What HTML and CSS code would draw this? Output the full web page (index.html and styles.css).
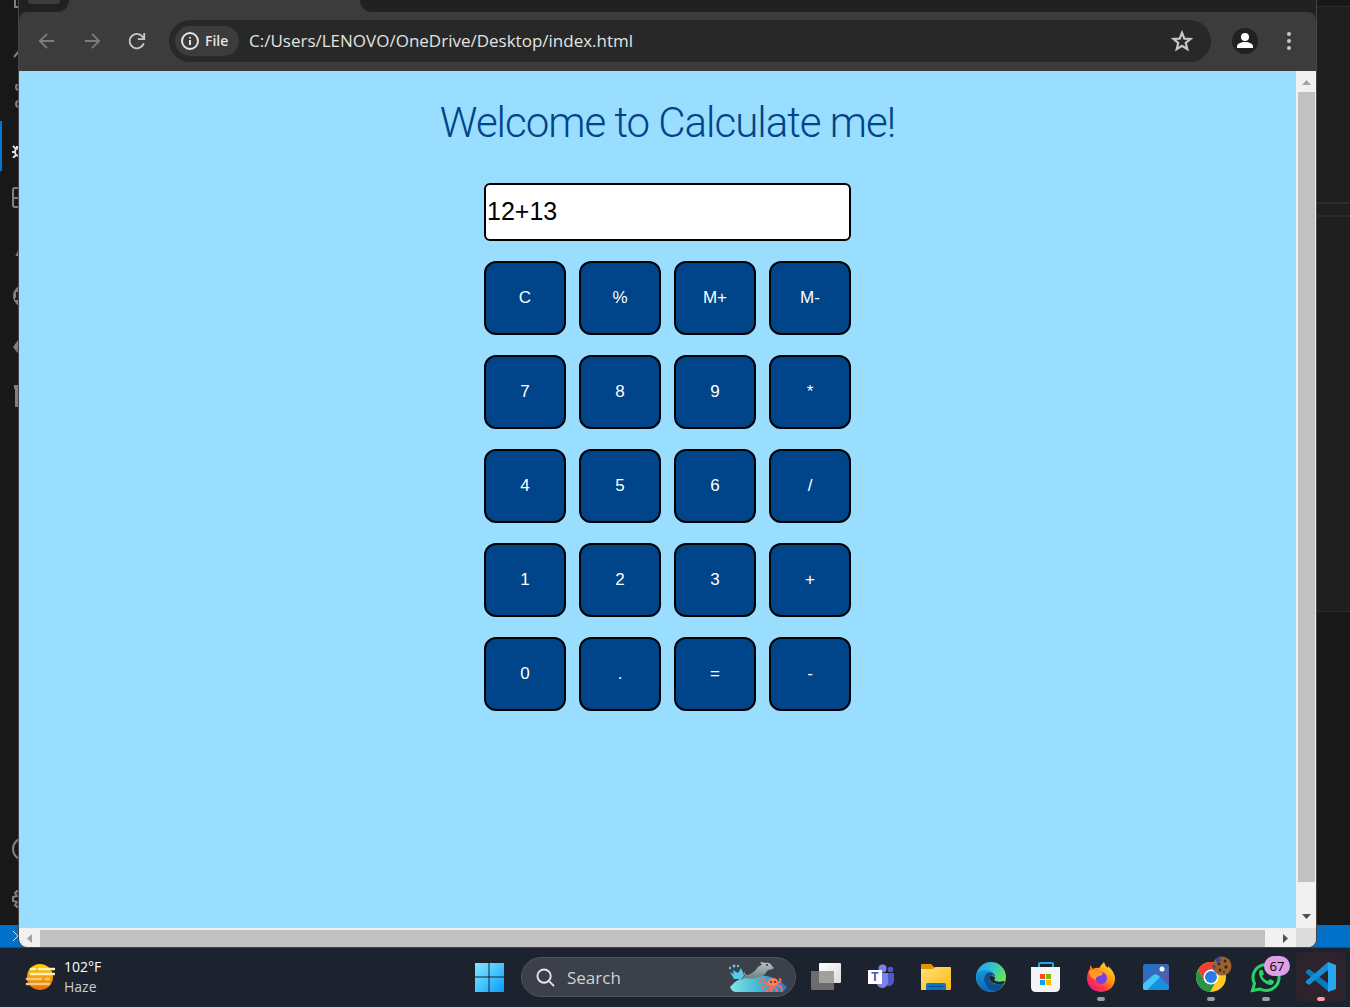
FILE: index.html
```html
<!DOCTYPE html>
<html lang="en">
<head>
<meta charset="utf-8">
<meta name="viewport" content="width=device-width, initial-scale=1">
<title>Calculate me</title>
<link rel="stylesheet" href="styles.css">
</head>
<body>
<div class="desktop">
  <div class="editor">
    <div class="editor-main">
      <nav class="activity" aria-label="Activity bar">
        <div class="act first"><svg viewBox="0 0 24 24"><path d="M3 2v20h14"/></svg></div>
        <div class="act"><svg viewBox="0 0 24 24"><path d="M2 23l6-7"/><circle cx="14" cy="10" r="7"/></svg></div>
        <div class="act"><svg viewBox="0 0 24 24"><circle cx="7" cy="3" r="3"/><circle cx="7" cy="20" r="3"/></svg></div>
        <div class="act active"><svg viewBox="0 0 24 24"><circle cx="7" cy="18" r="4"/><path d="M1 12l3 3M0 18h3M1 24l3-3M5 12v3"/></svg></div>
        <div class="act"><svg viewBox="0 0 24 24"><path d="M10 4H3q-2 0-2 2v15q0 2 2 2h17V14H1M10 4v19"/></svg></div>
        <div class="act"><svg viewBox="0 0 24 24"><path d="M11 8L5 21h6"/></svg></div>
        <div class="act"><svg viewBox="0 0 24 24"><circle class="solid" cx="12" cy="12" r="11"/><path class="dark" d="M5 8v7H3"/></svg></div>
        <div class="act"><svg viewBox="0 0 24 24"><path class="solid" d="M1 13l5-7 4 3-6 8zM4 17l3-3 3 3-4 2z"/></svg></div>
        <div class="act"><svg viewBox="0 0 24 24"><path class="solid" d="M2 1h6v4H2zM3 8h10v15H3zM3 5h5v4H3z"/></svg></div>
        <div class="act bottom"><svg viewBox="0 0 24 24"><circle cx="12" cy="11" r="11"/></svg></div>
        <div class="act"><svg viewBox="0 0 24 24"><path d="M9 1l-1 4-3-2-2 2 2 3-4 1v4l4 1-2 3 2 2 3-2 1 4h4"/></svg></div>
      </nav>
      <div class="editor-side"><div class="side-tabs"></div><div class="side-crumb"></div><div class="side-code"></div></div>
    </div>
    <footer class="status"><svg viewBox="0 0 16 16"><path d="M1 3l5 5-5 5M13 3L8 8l5 5"/></svg></footer>
  </div>

  <main class="browser">
    <div class="tabstrip"><div class="strip-left"><span></span></div><div class="strip-tab"></div><div class="strip-right"></div></div>
    <header class="toolbar">
      <button class="tool dim" aria-label="Back"><svg viewBox="0 0 20 20"><path d="M18 10H3M10 2l-8 8 8 8"/></svg></button>
      <button class="tool dim" aria-label="Forward"><svg viewBox="0 0 20 20"><path d="M2 10h15M10 2l8 8-8 8"/></svg></button>
      <button class="tool" aria-label="Reload"><svg viewBox="0 0 20 20"><path d="M17 6.500A8 8 0 1 0 17.500 12.500M18 1v7h-7"/></svg></button>
      <div class="address">
        <button class="chip"><svg viewBox="0 0 18 18"><circle cx="9" cy="9" r="8"/><path d="M9 8v5M9 5v1.500"/></svg>File</button>
        <input class="url" aria-label="Address" value="C:/Users/LENOVO/OneDrive/Desktop/index.html">
        <button class="star" aria-label="Bookmark"><svg viewBox="0 0 20 20"><path d="M10 2.500l2.100 5.300 5.600.4-4.300 3.600 1.400 5.600L10 14.300l-4.800 3.100 1.400-5.600-4.300-3.600 5.600-.4z"/></svg></button>
      </div>
      <button class="profile" aria-label="Profile"><svg viewBox="0 0 26 26"><circle cx="13" cy="9" r="4"/><path d="M5 20v-1.500C5 15.500 9 14 13 14s8 1.500 8 4.500V20z"/></svg></button>
      <button class="more" aria-label="Menu"><svg viewBox="0 0 6 20"><circle cx="3" cy="3" r="2"/><circle cx="3" cy="10" r="2"/><circle cx="3" cy="17" r="2"/></svg></button>
    </header>
    <div class="viewport">
      <section class="page">
        <div class="content">
          <h1>Welcome to Calculate me!</h1>
          <form class="calc">
            <input class="display" aria-label="Expression" value="12+13">
            <button type="button">C</button><button type="button">%</button><button type="button">M+</button><button type="button">M-</button>
            <button type="button">7</button><button type="button">8</button><button type="button">9</button><button type="button">*</button>
            <button type="button">4</button><button type="button">5</button><button type="button">6</button><button type="button">/</button>
            <button type="button">1</button><button type="button">2</button><button type="button">3</button><button type="button">+</button>
            <button type="button">0</button><button type="button">.</button><button type="button">=</button><button type="button">-</button>
          </form>
        </div>
      </section>
      <div class="vscroll"><svg class="faint" viewBox="0 0 20 21"><path d="M6 14h9l-4.500-5z"/></svg><div class="vthumb"></div><svg viewBox="0 0 20 21"><path d="M6 7h9l-4.500 5z"/></svg></div>
      <div class="hscroll"><svg class="faint" viewBox="0 0 21 19"><path d="M13 6v9l-5-4.500z"/></svg><div class="hthumb"></div><svg viewBox="0 0 21 19"><path d="M8 6v9l5-4.500z"/></svg></div>
      <div class="corner"></div>
    </div>
  </main>
</div>

<footer class="taskbar">
  <div class="weather">
    <svg viewBox="0 0 30 30"><defs><linearGradient id="sun" x2="0" y2="1"><stop stop-color="#ffd000"/><stop offset="1" stop-color="#f26b05"/></linearGradient></defs><circle cx="15" cy="15" r="13" fill="url(#sun)"/><g stroke="#fff0bd" stroke-width="2.600" stroke-linecap="round"><path d="M6 7h4M14 7h15M6 12h23"/><path stroke="#eacb8c" d="M2 17h14M21 17h3M2 22h22"/></g></svg>
    <div class="weather-text"><span>102°F</span><span class="haze">Haze</span></div>
  </div>
  <button class="task start" aria-label="Start"><svg viewBox="0 0 30 30"><defs><linearGradient id="win" x2="1" y2="1"><stop stop-color="#8be2ff"/><stop offset=".5" stop-color="#46c6ff"/><stop offset="1" stop-color="#0798fa"/></linearGradient></defs><path fill="url(#win)" d="M1 1h13.500v13.500H1zM15.500 1H30v13.500H15.500zM1 15.500h13.500V30H1zM15.500 15.500H30V30H15.500z"/></svg></button>
  <button class="search">
    <svg class="lens" viewBox="0 0 20 20"><circle cx="8.500" cy="8.500" r="7"/><path d="M14 14l5 5"/></svg>
    <span>Search</span>
    <svg class="art" viewBox="0 0 60 32"><defs><linearGradient id="sea" x2="1"><stop stop-color="#83e6e5"/><stop offset=".5" stop-color="#43b7d3"/><stop offset="1" stop-color="#137ee4"/></linearGradient><linearGradient id="dol" x2="0" y2="1"><stop stop-color="#b9c4c6"/><stop offset="1" stop-color="#66797d"/></linearGradient></defs>
      <path fill="url(#sea)" d="M2 26Q12 14 29 14Q47 14 59 26Q56 31 53 31H8Q4 31 2 26z"/>
      <path fill="#5bc8e8" d="M14 18H6L2 11l4 2-1-4 5 3 3-5 3 7z"/><g fill="#5bc8e8"><circle cx="2" cy="7" r="1.200"/><circle cx="6" cy="5" r="1.500"/><circle cx="10" cy="5" r="1.200"/></g>
      <path fill="url(#dol)" d="M16 10Q17 14 20 14Q26 12 30 6Q32 4 34 4L32 1L38 2Q42 1 44 5L46 7Q44 9 40 9Q36 16 28 17Q22 18 18 17L13 19Q13 16 17 15Q15 12 16 10z"/>
      <circle cx="39" cy="4" r="1" fill="#263b44"/>
      <g fill="none" stroke="#f46e50" stroke-width="2" stroke-linecap="round"><path d="M42 23q-6 0-6-4t-5 2M42 24q-7 0-8 4M43 26l-4 4M45 26l-2 4M47 26l2 4M49 24q5 1 5 6M49 22q5 0 3-4"/></g><ellipse cx="45" cy="21" rx="5" ry="4" fill="#ff8058"/><circle cx="43" cy="21" r="1" fill="#442a40"/><circle cx="47" cy="21" r="1" fill="#442a40"/>
    </svg>
  </button>
  <nav class="tasks" aria-label="Pinned apps">
    <button class="task" aria-label="Task view"><svg viewBox="0 0 32 32"><defs><linearGradient id="tv" x2="1" y2="1"><stop stop-color="#fff"/><stop offset="1" stop-color="#dadada"/></linearGradient></defs><rect x="9" y="2" width="22" height="20" rx="1" fill="url(#tv)"/><path fill="#6c6c6c" d="M1 10h8v12h15v7H2l-1-1z"/><path fill="#a0a0a0" d="M9 10h15v12H9z"/></svg></button>
    <button class="task" aria-label="Teams"><svg viewBox="0 0 32 32"><circle cx="17.500" cy="7.500" r="4" fill="#7b83eb"/><circle cx="25.500" cy="8.500" r="2.800" fill="#5059c9"/><path fill="#5059c9" d="M21 12h8v8q-1 6-7 5z"/><path fill="#7b83eb" d="M10 12h13v9q-1 6-6 6-5-1-6-6z"/><rect x="3" y="9" width="14" height="14" fill="#fff"/><text x="10" y="20" text-anchor="middle" class="teams-t">T</text></svg></button>
    <button class="task" aria-label="File Explorer"><svg viewBox="0 0 32 32"><defs><linearGradient id="fold" x2="1" y2="1"><stop stop-color="#ffe07b"/><stop offset="1" stop-color="#fdb813"/></linearGradient></defs><path fill="#df9600" d="M1 4q0-1 1-1h9l3 3v6H1z"/><path fill="url(#fold)" d="M1 8h12l2-2h15q1 0 1 1v21q0 1-1 1H1z"/><path fill="#0875c4" d="M6 29v-5q0-2 2-2h16q2 0 2 2v5z"/><path stroke="#064a8a" d="M9 25.500h14"/></svg></button>
    <button class="task" aria-label="Edge"><svg viewBox="0 0 32 32"><defs><linearGradient id="eg" x2="1" y2=".5"><stop stop-color="#209fe7"/><stop offset=".5" stop-color="#30c2d2"/><stop offset="1" stop-color="#6cea48"/></linearGradient><linearGradient id="eb" x2="0" y2="1"><stop stop-color="#1598dc"/><stop offset="1" stop-color="#0a63b5"/></linearGradient></defs><circle cx="16" cy="16" r="15" fill="url(#eg)"/><path fill="url(#eb)" d="M1 14q2-5 9-5 8 0 10 6-5-2-6 2 0 5 6 6 5 1 9-2-4 10-13 10Q2 30 1 14z"/><path fill="#124e8d" d="M12 12q-5 5-1 12 4 6 10 6 6-2 8-8-4 3-9 1-6-2-6-6 1-4 6-2-2-5-8-3z"/><path fill="#1b2430" d="M19 15q2 2 0 4 3 3 10 1l1 1q-2 3-8 2-7-1-8-6 1-4 5-1z"/></svg></button>
    <button class="task" aria-label="Store"><svg viewBox="0 0 32 32"><path d="M9 8V3q0-1 1-1h12q1 0 1 1v5" fill="none" stroke="#22a5ef" stroke-width="2"/><path fill="#f4f4f4" d="M1 6h29v20q0 5-5 5H6q-5 0-5-5z"/><path fill="#f25022" d="M10 13h5v5h-5z"/><path fill="#7fba00" d="M16 13h5v5h-5z"/><path fill="#00a4ef" d="M10 19h5v5h-5z"/><path fill="#ffb900" d="M16 19h5v5h-5z"/></svg></button>
    <button class="task running" aria-label="Firefox"><svg viewBox="0 0 32 32"><defs><linearGradient id="ff" x1="1" x2=".2" y2="1"><stop stop-color="#fff44f"/><stop offset=".45" stop-color="#ff980e"/><stop offset=".75" stop-color="#ff3647"/><stop offset="1" stop-color="#e31587"/></linearGradient></defs><path fill="url(#ff)" d="M5 4l3 4q3-2 6-1 3-4 5-6 1 4 4 6V5q7 6 7 13-1 12-14 13Q3 30 2 18 2 11 5 8z"/><circle cx="16" cy="17" r="6" fill="#7542e5"/><path fill="#ff9b20" d="M4 10q4-2 7 0l4 1 3 1q-1 3-4 3-4 1-3 4-6-1-7-9z"/><path fill="#b833bd" d="M11 19q3 4 8 3l-3 1q-4 0-5-4z"/></svg></button>
    <button class="task" aria-label="Photos"><svg viewBox="0 0 32 32"><defs><linearGradient id="ph" x2="1" y2="1"><stop stop-color="#1976cf"/><stop offset="1" stop-color="#64559d"/></linearGradient></defs><rect x="3" y="3" width="26" height="26" rx="2" fill="url(#ph)"/><path fill="#1690e1" d="M12 16q4-5 8 0l9 9v2q0 2-2 2H7z"/><path fill="#43c8f8" d="M3 23l9-8q4-4 8 1L7 29H5q-2 0-2-2z"/><circle cx="22" cy="8" r="2.500" fill="#fff"/></svg></button>
    <button class="task running" aria-label="Chrome"><svg viewBox="0 0 32 32"><circle cx="16" cy="16" r="15" fill="#ffcb24"/><path fill="#ea4335" d="M3 8.500A15 15 0 0 1 29 8.500H16L9.500 20z"/><path fill="#289447" d="M3 8.500l6.500 11.500q2 3 6.500 3h3.500L15 31A15 15 0 0 1 3 8.500z"/><circle cx="16" cy="16" r="7.500" fill="#fff"/><circle cx="16" cy="16" r="6" fill="#287de9"/></svg><svg class="cookie" viewBox="0 0 20 20"><circle cx="10" cy="10" r="9.500" fill="#9a622e"/><path fill="#354c93" d="M3 3l5-3 1 5-4 2zM0 9l4 1-2 4z"/><g fill="#412616"><circle cx="7" cy="8" r="1.500"/><circle cx="13" cy="5" r="1.500"/><circle cx="14" cy="11" r="1.700"/><circle cx="8" cy="14" r="1.500"/><circle cx="12" cy="16" r="1"/></g></svg></button>
    <button class="task running" aria-label="WhatsApp"><svg viewBox="0 0 32 32"><path fill="none" stroke="#25d366" stroke-width="3" d="M2.500 29.500l2-7A13 13 0 1 1 10 28z"/><path fill="#25d366" d="M10 9q2-1 3 1l1 3-2 2q2 4 6 5l2-2 4 2q0 4-4 4Q11 22 9 13q0-3 1-4z"/></svg><span class="badge">67</span></button>
    <button class="task running current" aria-label="Visual Studio Code"><svg viewBox="0 0 32 32"><path fill="#0879bd" d="M1 10l3-2 20 15v8L1 12z"/><path fill="#168fd2" d="M1 20L23 1v8L4 24l-3-2z"/><path fill="#29a8f2" d="M23 1l8 3v24l-8 3z"/></svg></button>
  </nav>
</footer>
</body>
</html>
```
FILE: styles.css
```css
* { box-sizing: border-box; }
body { margin: 0; min-height: 100vh; display: flex; flex-direction: column; background: #181818; font-family: "Open Sans", "Noto Sans", sans-serif; }
button, input { font: inherit; color: inherit; margin: 0; padding: 0; border: 0; background: none; }
svg { display: block; flex: none; }
h1 { margin: 0; }

.desktop { flex: 1; display: grid; overflow: hidden; }
.desktop > * { grid-area: 1 / 1; min-width: 0; }

/* Code editor behind the browser */
.editor { display: flex; flex-direction: column; background: #181818; }
.editor-main { flex: 1; display: flex; justify-content: space-between; }
.activity { width: 48px; display: flex; flex-direction: column; }
.act { height: 50px; display: flex; align-items: center; justify-content: center; }
.act.first { height: 21px; align-items: flex-end; padding-bottom: 12px; }
.act.active { border-left: 2px solid #0078d4; padding-right: 2px; }
.act.bottom { margin-top: auto; }
.act svg { width: 24px; height: 24px; fill: none; stroke: #808080; stroke-width: 2; }
.act.active svg { stroke: #e0e0e0; }
.act .solid { fill: #808080; stroke: none; }
.act .dark { stroke: #202020; }
.editor-side { width: 34px; padding-top: 6px; display: flex; flex-direction: column; }
.side-tabs { height: 198px; border-top: 1px solid #2b2b2b; border-bottom: 2px solid #2b2b2b; background: #1f1f1f; }
.side-crumb { height: 13px; border-bottom: 2px solid #2b2b2b; background: #1f1f1f; }
.side-code { height: 395px; border-bottom: 1px solid #2b2b2b; background: #1f1f1f; }
.status { height: 22px; background: #0070c8; padding: 3px 12px; }
.status svg { width: 16px; height: 16px; fill: none; stroke: #d8e8f4; stroke-width: 1; }

/* Browser window */
.browser { margin: 0 34px 0 19px; display: flex; flex-direction: column; border-radius: 0 0 8px 8px; overflow: hidden; background: #1f2221; box-shadow: 0 0 0 1px #454545; }
.tabstrip { height: 12px; background: #3c3c3c; display: flex; }
.strip-left { width: 50px; background: #1f2221; border-radius: 0 0 12px 0; display: flex; justify-content: center; }
.strip-left span { width: 32px; height: 4px; background: #3c3c3c; border-radius: 0 0 12px 12px; }
.strip-tab { width: 291px; }
.strip-right { flex: 1; background: #1f2221; border-radius: 0 0 0 12px; }
.toolbar { height: 59px; display: flex; align-items: center; padding: 0 20px 2px 5px; border-radius: 8px 8px 0 0; background: #3c3c3c; }
.tool { width: 45px; display: flex; justify-content: center; }
.tool svg { width: 18px; height: 18px; }
.tool svg, .star svg { fill: none; stroke: #c7c7c7; stroke-width: 2; }
.tool.dim svg { stroke: #7c7c7c; }
.address { flex: 1; min-width: 0; height: 42px; margin-left: 10px; padding: 6px; display: flex; align-items: center; border-radius: 21px; background: #282828; }
.chip { height: 30px; width: 64px; padding-left: 6px; display: flex; align-items: center; gap: 6px; border-radius: 15px; background: #3c3c3c; color: #e3e3e3; font-size: 14px; font-weight: 600; }
.chip svg { width: 18px; height: 18px; fill: none; stroke: #e3e3e3; stroke-width: 2; }
.url { flex: 1; min-width: 0; margin-left: 10px; height: 30px; color: #e3e3e3; font-size: 17px; }
.star { margin-right: 12px; }
.star svg { width: 22px; height: 22px; }
.profile { margin-left: 21px; width: 26px; height: 26px; border-radius: 50%; background: #1f2221; }
.profile svg { width: 26px; height: 26px; fill: #fff; }
.more { margin-left: 24px; width: 14px; display: flex; justify-content: center; }
.more svg { width: 6px; height: 20px; fill: #c7c7c7; }

.viewport { flex: 1; display: grid; grid-template-columns: minmax(0, 1fr) 20px; grid-template-rows: 1fr 19px; background: #f1f1f1; }
.page { background: #99ddff; overflow: hidden; }
.content { width: calc(100% + 20px); display: flex; flex-direction: column; align-items: center; padding: 27px 0; }
h1 { color: #004489; font-family: Roboto, sans-serif; font-size: 42px; line-height: 50px; font-weight: 300; letter-spacing: -1px; }
.calc { margin-top: 35px; display: grid; grid-template-columns: repeat(4, 82px); gap: 20px 13px; font-family: "Liberation Sans", Arial, sans-serif; }
.display { grid-column: 1 / -1; width: 100%; height: 58px; padding: 0 1px 2px; border: 2px solid #000; border-radius: 6px; background: #fff; color: #000; font-size: 25px; }
.calc button { height: 74px; border: 2px solid #000; border-radius: 12px; background: #004489; color: #fff; font-size: 17px; }
.vscroll { display: flex; flex-direction: column; padding-right: 1px; }
.vscroll svg { width: 20px; height: 21px; }
.vthumb { flex: 1; margin: 0 0 25px 2px; background: #c1c1c1; }
.hscroll { display: flex; }
.hscroll svg { width: 21px; height: 19px; }
.hthumb { flex: 1; margin: 2px 10px 0 0; background: #c1c1c1; }
.viewport > div svg { fill: #505050; }
.viewport > div svg.faint { fill: #a3a3a3; }
.corner { background: #dcdcdc; }

/* Taskbar */
.taskbar { height: 60px; display: flex; align-items: center; padding: 0 4px 0 25px; background: #1c232e; box-shadow: inset 0 1px #41454b; color: #fff; font-size: 14px; }
.weather { display: flex; align-items: center; gap: 9px; margin-right: auto; }
.weather > svg { width: 30px; height: 30px; }
.weather-text { display: flex; flex-direction: column; line-height: 20px; }
.haze { color: #c9cbce; }
.task { position: relative; width: 50px; height: 50px; display: flex; align-items: center; justify-content: center; border-radius: 5px; }
.task svg { width: 32px; height: 32px; }
.task.start { width: 54px; margin-right: 5px; }
.task.start svg { width: 30px; height: 30px; }
.search { width: 275px; height: 40px; padding: 0 7px 0 14px; display: flex; align-items: center; gap: 12px; border-radius: 20px; border: 1px solid #4f545d; background: #3b404b; color: #d0d2d5; font-size: 17px; }
.search .lens { width: 19px; height: 19px; fill: none; stroke: #e6e6e6; stroke-width: 2; }
.search .art { width: 60px; height: 32px; margin-left: auto; }
.tasks { display: flex; gap: 5px; margin-left: 5px; }
.teams-t { font: bold 12px "Liberation Sans", sans-serif; fill: #4b53bc; }
.running::after { content: ""; position: absolute; left: 21px; bottom: 1px; width: 8px; height: 4px; border-radius: 2px; background: #9b9ea3; }
.current { background: #2c232c; }
.current::after { background: #ff99a4; }
.task .cookie { position: absolute; width: 20px; height: 20px; right: 4px; top: 4px; }
.badge { position: absolute; right: 1px; top: 4px; width: 26px; height: 20px; border-radius: 10px; background: #df9fe8; color: #000; font-size: 13px; line-height: 20px; text-align: center; }
```
